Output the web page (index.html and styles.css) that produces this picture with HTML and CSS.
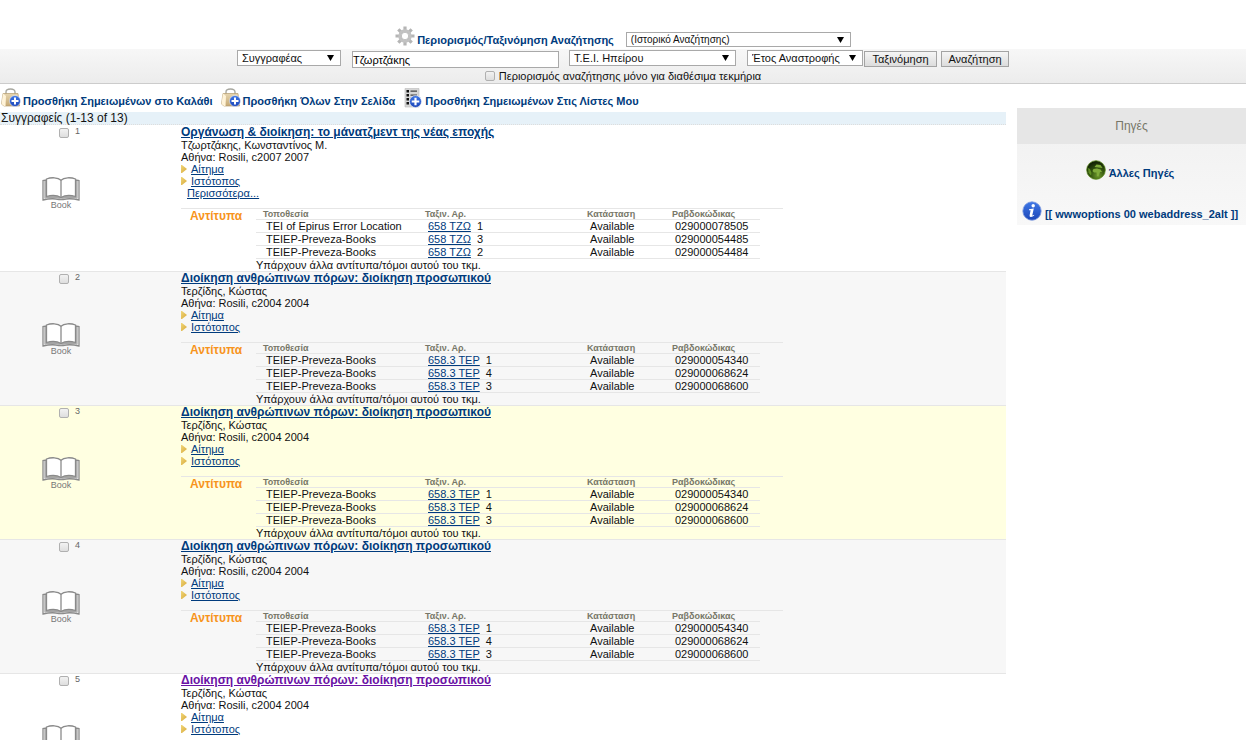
FILE: index.html
```html
<!DOCTYPE html>
<html lang="el">
<head>
<meta charset="utf-8">
<title>Αναζήτηση καταλόγου</title>
<link rel="stylesheet" href="styles.css">
</head>
<body>
<svg class="defs" aria-hidden="true">
  <defs>
    <linearGradient id="gold" x1="0" y1="0" x2="1" y2="1"><stop offset="0" stop-color="#f0d678"/><stop offset="1" stop-color="#d8a93a"/></linearGradient>
    <linearGradient id="tan" x1="0" y1="0" x2="0" y2="1"><stop offset="0" stop-color="#e6d5b0"/><stop offset="1" stop-color="#c5a873"/></linearGradient>
    <linearGradient id="blue" x1="0" y1="0" x2="0" y2="1"><stop offset="0" stop-color="#3f78e6"/><stop offset="1" stop-color="#1c46b8"/></linearGradient>
    <radialGradient id="green" cx=".6" cy=".8" r=".8"><stop offset="0" stop-color="#6f9a2c"/><stop offset=".5" stop-color="#31520f"/><stop offset="1" stop-color="#0d1a04"/></radialGradient>
    <symbol id="book" viewBox="0 0 38 24">
      <g fill="none" stroke="#8a8a8a" stroke-width="1.300">
        <path fill="#fff" d="M1 3.500V23C7 21.500 13 21.500 17 22.500H21C25 21.500 31 21.500 37 23V3.500L34 3V20H4V3Z"/>
        <path fill="#fff" d="M4.500 2C9 .2 16 .2 19 3.200C22 .2 29 .2 33.500 2V19.500C29 18 23 18 19 20.500C15 18 9 18 4.500 19.500Z"/>
        <path d="M19 3.200V20.500"/>
        <path stroke-width=".9" stroke="#a5a5a5" d="M2.800 4V21.300C8 19.500 14 20 18 21.800H20C24 20 30 19.500 35.200 21.300V4"/>
      </g>
    </symbol>
    <symbol id="plus" viewBox="0 0 12 12">
      <circle cx="6" cy="6" r="5.500" fill="url(#blue)" stroke="#fff" stroke-width=".5"/>
      <path d="M6 2.500V9.500M2.500 6H9.500" stroke="#fff" stroke-width="2"/>
    </symbol>
    <symbol id="bag" viewBox="0 0 20 20">
      <path d="M5 8V4Q5 1 9.500 1T14 4V8" fill="none" stroke="#a8a8a0" stroke-width="1.400"/>
      <path d="M2 5.500H17L18.500 18H3L.5 16Z" fill="url(#tan)" stroke="#b59c70" stroke-width=".7"/>
      <path d="M2 5.500L5 8L4.500 18H3L.5 16Z" fill="#fff3d8"/>
      <use href="#plus" x="8" y="7" width="12" height="12"/>
    </symbol>
    <symbol id="list" viewBox="0 0 18 20">
      <path d="M1 .5H15V19H1Z" fill="#d6d6d6" stroke="#bbb" stroke-width=".6"/>
      <path d="M2.500 2H5V4.500H2.500ZM2.500 6H5V8.500H2.500ZM2.500 10H5V12.500H2.500ZM2.500 14H5V16.500H2.500Z" fill="#111"/>
      <path d="M6.500 3.200H13M6.500 7.200H13M6.500 11.200H11M6.500 15.200H11" stroke="#444" stroke-width="1.300"/>
      <use href="#plus" x="5" y="7" width="13" height="13"/>
    </symbol>
    <symbol id="arrow" viewBox="0 0 6 8"><path d="M0 0H1L6 4L1 8H0Z" fill="url(#gold)"/></symbol>
  </defs>
</svg>

<form class="search" onsubmit="return false">
  <div class="history">
    <svg class="gear" viewBox="0 0 20 20" aria-hidden="true">
      <g stroke="#b5b5b5" stroke-width="3.200"><path d="M10 .5V5M10 15V19.500M.5 10H5M15 10H19.500M3.300 3.300L6.500 6.500M13.500 13.500L16.700 16.700M16.700 3.300L13.500 6.500M6.500 13.500L3.300 16.700"/></g>
      <circle cx="10" cy="10" r="5.200" fill="#fff" stroke="#c2c2c2" stroke-width="3"/>
      <circle cx="10" cy="10" r="3.700" fill="none" stroke="#a4a4a4" stroke-width=".6"/>
    </svg>
    <a class="limit" href="#">Περιορισμός/Ταξινόμηση Αναζήτησης</a>
    <select class="select select-history" aria-label="Ιστορικό"><option>(Ιστορικό Αναζήτησης)</option></select>
  </div>
  <div class="bar">
    <div class="fields">
      <select class="select select-index" aria-label="Πεδίο"><option>Συγγραφέας</option></select>
      <input class="query" type="text" value="Τζωρτζάκης" aria-label="Όρος αναζήτησης">
      <select class="select select-scope" aria-label="Συλλογή"><option>Τ.Ε.Ι. Ηπείρου</option></select>
      <span class="actions">
        <select class="select select-sort" aria-label="Σειρά"><option>Έτος Αναστροφής</option></select>
        <button class="button button-sort" type="button">Ταξινόμηση</button>
      </span>
      <button class="button button-search" type="submit">Αναζήτηση</button>
    </div>
    <label class="only"><input class="tick" type="checkbox">Περιορισμός αναζήτησης μόνο για διαθέσιμα τεκμήρια</label>
  </div>
</form>

<div class="page">
  <main class="main">
    <nav class="tools">
      <a href="#"><svg class="tool-icon" aria-hidden="true"><use href="#bag"/></svg>Προσθήκη Σημειωμένων στο Καλάθι</a>
      <a href="#"><svg class="tool-icon" aria-hidden="true"><use href="#bag"/></svg>Προσθήκη Όλων Στην Σελίδα</a>
      <a href="#"><svg class="tool-icon" aria-hidden="true"><use href="#list"/></svg>Προσθήκη Σημειωμένων Στις Λίστες Μου</a>
    </nav>
    <h1 class="summary">Συγγραφείς (1-13 of 13)</h1>

    <article class="record first">
      <div class="mark">
        <label class="pick"><input class="tick" type="checkbox">1</label>
        <div class="media"><svg class="book" aria-hidden="true"><use href="#book"/></svg><span>Book</span></div>
      </div>
      <div class="info">
        <h2><a href="#">Οργάνωση &amp; διοίκηση: το μάνατζμεντ της νέας εποχής</a></h2>
        <p>Τζωρτζάκης, Κωνσταντίνος Μ.</p>
        <p>Αθήνα: Rosili, c2007 2007</p>
        <p class="link"><svg class="arrow" aria-hidden="true"><use href="#arrow"/></svg><a href="#">Αίτημα</a></p>
        <p class="link"><svg class="arrow" aria-hidden="true"><use href="#arrow"/></svg><a href="#">Ιστότοπος</a></p>
        <p class="more"><a href="#">Περισσότερα...</a></p>
        <section class="copies">
          <h3>Αντίτυπα</h3>
          <div>
            <table>
              <thead><tr><th>Τοποθεσία</th><th>Ταξιν. Αρ.</th><th class="state">Κατάσταση</th><th class="code">Ραβδοκώδικας</th></tr></thead>
              <tbody>
                <tr><td>TEI of Epirus Error Location</td><td><a href="#">658 ΤΖΩ</a><span class="copy">1</span></td><td>Available</td><td>029000078505</td></tr>
                <tr><td>TEIEP-Preveza-Books</td><td><a href="#">658 ΤΖΩ</a><span class="copy">3</span></td><td>Available</td><td>029000054485</td></tr>
                <tr><td>TEIEP-Preveza-Books</td><td><a href="#">658 ΤΖΩ</a><span class="copy">2</span></td><td>Available</td><td>029000054484</td></tr>
              </tbody>
            </table>
            <p>Υπάρχουν άλλα αντίτυπα/τόμοι αυτού του τκμ.</p>
          </div>
        </section>
      </div>
    </article>

    <article class="record shaded">
      <div class="mark">
        <label class="pick"><input class="tick" type="checkbox">2</label>
        <div class="media"><svg class="book" aria-hidden="true"><use href="#book"/></svg><span>Book</span></div>
      </div>
      <div class="info">
        <h2><a href="#">Διοίκηση ανθρώπινων πόρων: διοίκηση προσωπικού</a></h2>
        <p>Τερζίδης, Κώστας</p>
        <p>Αθήνα: Rosili, c2004 2004</p>
        <p class="link"><svg class="arrow" aria-hidden="true"><use href="#arrow"/></svg><a href="#">Αίτημα</a></p>
        <p class="link"><svg class="arrow" aria-hidden="true"><use href="#arrow"/></svg><a href="#">Ιστότοπος</a></p>
        <section class="copies">
          <h3>Αντίτυπα</h3>
          <div>
            <table>
              <thead><tr><th>Τοποθεσία</th><th>Ταξιν. Αρ.</th><th class="state">Κατάσταση</th><th class="code">Ραβδοκώδικας</th></tr></thead>
              <tbody>
                <tr><td>TEIEP-Preveza-Books</td><td><a href="#">658.3 ΤΕΡ</a><span class="copy">1</span></td><td>Available</td><td>029000054340</td></tr>
                <tr><td>TEIEP-Preveza-Books</td><td><a href="#">658.3 ΤΕΡ</a><span class="copy">4</span></td><td>Available</td><td>029000068624</td></tr>
                <tr><td>TEIEP-Preveza-Books</td><td><a href="#">658.3 ΤΕΡ</a><span class="copy">3</span></td><td>Available</td><td>029000068600</td></tr>
              </tbody>
            </table>
            <p>Υπάρχουν άλλα αντίτυπα/τόμοι αυτού του τκμ.</p>
          </div>
        </section>
      </div>
    </article>

    <article class="record active">
      <div class="mark">
        <label class="pick"><input class="tick" type="checkbox">3</label>
        <div class="media"><svg class="book" aria-hidden="true"><use href="#book"/></svg><span>Book</span></div>
      </div>
      <div class="info">
        <h2><a href="#">Διοίκηση ανθρώπινων πόρων: διοίκηση προσωπικού</a></h2>
        <p>Τερζίδης, Κώστας</p>
        <p>Αθήνα: Rosili, c2004 2004</p>
        <p class="link"><svg class="arrow" aria-hidden="true"><use href="#arrow"/></svg><a href="#">Αίτημα</a></p>
        <p class="link"><svg class="arrow" aria-hidden="true"><use href="#arrow"/></svg><a href="#">Ιστότοπος</a></p>
        <section class="copies">
          <h3>Αντίτυπα</h3>
          <div>
            <table>
              <thead><tr><th>Τοποθεσία</th><th>Ταξιν. Αρ.</th><th class="state">Κατάσταση</th><th class="code">Ραβδοκώδικας</th></tr></thead>
              <tbody>
                <tr><td>TEIEP-Preveza-Books</td><td><a href="#">658.3 ΤΕΡ</a><span class="copy">1</span></td><td>Available</td><td>029000054340</td></tr>
                <tr><td>TEIEP-Preveza-Books</td><td><a href="#">658.3 ΤΕΡ</a><span class="copy">4</span></td><td>Available</td><td>029000068624</td></tr>
                <tr><td>TEIEP-Preveza-Books</td><td><a href="#">658.3 ΤΕΡ</a><span class="copy">3</span></td><td>Available</td><td>029000068600</td></tr>
              </tbody>
            </table>
            <p>Υπάρχουν άλλα αντίτυπα/τόμοι αυτού του τκμ.</p>
          </div>
        </section>
      </div>
    </article>

    <article class="record shaded">
      <div class="mark">
        <label class="pick"><input class="tick" type="checkbox">4</label>
        <div class="media"><svg class="book" aria-hidden="true"><use href="#book"/></svg><span>Book</span></div>
      </div>
      <div class="info">
        <h2><a href="#">Διοίκηση ανθρώπινων πόρων: διοίκηση προσωπικού</a></h2>
        <p>Τερζίδης, Κώστας</p>
        <p>Αθήνα: Rosili, c2004 2004</p>
        <p class="link"><svg class="arrow" aria-hidden="true"><use href="#arrow"/></svg><a href="#">Αίτημα</a></p>
        <p class="link"><svg class="arrow" aria-hidden="true"><use href="#arrow"/></svg><a href="#">Ιστότοπος</a></p>
        <section class="copies">
          <h3>Αντίτυπα</h3>
          <div>
            <table>
              <thead><tr><th>Τοποθεσία</th><th>Ταξιν. Αρ.</th><th class="state">Κατάσταση</th><th class="code">Ραβδοκώδικας</th></tr></thead>
              <tbody>
                <tr><td>TEIEP-Preveza-Books</td><td><a href="#">658.3 ΤΕΡ</a><span class="copy">1</span></td><td>Available</td><td>029000054340</td></tr>
                <tr><td>TEIEP-Preveza-Books</td><td><a href="#">658.3 ΤΕΡ</a><span class="copy">4</span></td><td>Available</td><td>029000068624</td></tr>
                <tr><td>TEIEP-Preveza-Books</td><td><a href="#">658.3 ΤΕΡ</a><span class="copy">3</span></td><td>Available</td><td>029000068600</td></tr>
              </tbody>
            </table>
            <p>Υπάρχουν άλλα αντίτυπα/τόμοι αυτού του τκμ.</p>
          </div>
        </section>
      </div>
    </article>

    <article class="record visited">
      <div class="mark">
        <label class="pick"><input class="tick" type="checkbox">5</label>
        <div class="media"><svg class="book" aria-hidden="true"><use href="#book"/></svg></div>
      </div>
      <div class="info">
        <h2><a href="#">Διοίκηση ανθρώπινων πόρων: διοίκηση προσωπικού</a></h2>
        <p>Τερζίδης, Κώστας</p>
        <p>Αθήνα: Rosili, c2004 2004</p>
        <p class="link"><svg class="arrow" aria-hidden="true"><use href="#arrow"/></svg><a href="#">Αίτημα</a></p>
        <p class="link"><svg class="arrow" aria-hidden="true"><use href="#arrow"/></svg><a href="#">Ιστότοπος</a></p>
      </div>
    </article>
  </main>

  <aside class="sources">
    <h2>Πηγές</h2>
    <div class="source-links">
      <a href="#">
        <svg class="source-icon" viewBox="0 0 20 20" aria-hidden="true">
          <circle cx="10" cy="10" r="9.300" fill="url(#green)" stroke="#5b8a1c" stroke-width=".8"/>
          <path d="M7.500 9L11 8.500L14.500 9.500L16 12H14L12.500 16.500L11 16L10.500 12.500H8L6.500 11ZM8.500 7L10.500 4.500L14.500 5L16.500 8L12.500 7.500Z" fill="#7fab3a"/>
          <path d="M2 8L4 9L5.500 13L5 15.500L2.500 13Z" fill="#5f8f22"/>
        </svg>
        Άλλες Πηγές</a>
      <a href="#">
        <svg class="source-icon" viewBox="0 0 20 20" aria-hidden="true">
          <circle cx="10" cy="10" r="9.200" fill="url(#blue)" stroke="#7d9be0" stroke-width=".8"/>
          <circle cx="11.200" cy="4.800" r="1.700" fill="#fff"/>
          <path d="M7 8.300L11.800 7.600L10.300 14.200Q10.200 15 12.300 13.800L12 14.800Q7 17.500 7.600 14.200L8.600 9.300L7 9.200Z" fill="#fff"/>
        </svg>
        [[ wwwoptions 00 webaddress_2alt ]]</a>
    </div>
  </aside>
</div>
</body>
</html>
```
FILE: styles.css
```css
* { box-sizing: border-box; }
body {
  margin: 0;
  height: 100vh;
  overflow: hidden;
  background: #fff;
  color: #111;
  font: 11px/12px "Liberation Sans", Arial, sans-serif;
}
h1, h2, h3, p { margin: 0; font-size: inherit; }
a { color: #003b7d; }
.defs { position: absolute; width: 0; height: 0; }

.search { padding-top: 26px; }
.history { display: flex; justify-content: center; height: 23px; }
.gear { width: 20px; height: 20px; margin-right: 2px; }
.limit { margin: 8px 12px 0 0; font-weight: bold; text-decoration: none; }
.select {
  appearance: none;
  height: 16px;
  padding: 0 20px 0 4px;
  border: 1px solid #a9a9a9;
  border-radius: 0;
  background: #fff url("data:image/svg+xml,%3Csvg xmlns='http://www.w3.org/2000/svg' width='7' height='6'%3E%3Cpath d='M0 0H7L3.500 6Z'/%3E%3C/svg%3E") no-repeat right 6px center;
  color: #111;
  font: 11px/14px "Liberation Sans", Arial, sans-serif;
}
.select-history { width: 225px; height: 15px; margin-top: 6px; font-size: 10px; line-height: 13px; }
.bar {
  height: 35px;
  padding-top: 1px;
  border-bottom: 1px solid #ccc;
  background: linear-gradient(#f7f7f7, #ececec);
}
.fields { display: flex; justify-content: center; align-items: flex-start; }
.select-index { width: 104px; }
.select-scope { width: 167px; margin-right: 11px; }
.select-sort { width: 116px; padding-right: 14px; }
.query {
  width: 207px;
  height: 17px;
  margin: 1px 10px 0 11px;
  padding: 0;
  border: 1px solid #a9a9a9;
  font: inherit;
}
.actions { display: flex; gap: 1px; margin-right: 4px; }
.button {
  height: 16px;
  margin-top: 1px;
  padding: 0;
  border: 1px solid #a3a3a3;
  background: linear-gradient(#f5f5f5, #dcdcdc);
  color: #111;
  font: inherit;
}
.button-sort { width: 73px; }
.button-search { width: 68px; }
.only { display: flex; justify-content: center; align-items: center; gap: 4px; margin-top: 2px; line-height: 12px; }
.tick {
  appearance: none;
  width: 10px;
  height: 10px;
  margin: 0;
  border: 1px solid #b0b0b0;
  border-radius: 2px;
  background: linear-gradient(#f2f2f2, #dedede);
}

.page { display: grid; grid-template-columns: minmax(0, 1fr) 229px; column-gap: 11px; align-items: start; }
.tools { display: flex; gap: 8px; height: 28px; padding: 4px 0 0 1px; }
.tools a { display: flex; gap: 2px; font-weight: bold; text-decoration: none; line-height: 26px; }
.tool-icon { width: 20px; height: 20px; }
.summary {
  height: 13px;
  padding-left: 1px;
  border-bottom: 1px dotted #ddd;
  background: #e6f1f8;
  font-size: 12px;
  font-weight: normal;
}
.record { display: grid; grid-template-columns: 181px minmax(0, 1fr); border-top: 1px solid #e6e6e6; }
.first { border-top-color: transparent; }
.shaded { background: #f7f7f7; }
.active { background: #ffffe1; }
.visited h2 a { color: #6a12a5; }
.mark { padding-left: 59px; }
.pick { display: flex; gap: 6px; padding-top: 2px; color: #666; font-size: 9px; line-height: 6px; }
.media {
  width: 38px;
  margin: 39px 0 0 -17px;
  color: #777;
  font-size: 9px;
  line-height: 8px;
  text-align: center;
}
.book { display: block; width: 38px; height: 24px; }
.info h2 { font-size: 12px; line-height: 13px; }
.link { display: flex; align-items: center; gap: 4px; }
.arrow { width: 6px; height: 8px; }
.more { padding-left: 6px; }
.copies { display: grid; grid-template-columns: 75px 504px; width: 602px; margin-top: 9px; border-top: 1px solid #e6e6e6; }
.copies h3 { padding-left: 9px; color: #f7941d; font-size: 12px; line-height: 14px; }
table { width: 504px; table-layout: fixed; border-collapse: separate; border-spacing: 0; }
th, td { border-bottom: 1px solid #e6e6e6; text-align: left; white-space: nowrap; }
th { padding: 0 0 0 7px; color: #777768; font-size: 9px; line-height: 10px; }
td { padding: 0 0 0 10px; line-height: 12px; }
.state { width: 85px; }
.code { width: 95px; }
.copy { margin-left: 6px; }

.sources { margin-top: 24px; background: linear-gradient(#f0f0f0, #f8f8f8); text-align: center; }
.sources h2 { background: #e6e6e6; color: #777768; font-size: 12px; font-weight: normal; line-height: 36px; }
.source-links { display: grid; gap: 21px; padding: 16px 3px 4px 0; }
.source-links a { display: flex; justify-content: center; gap: 3px; font-weight: bold; line-height: 26px; height: 20px; text-decoration: none; }
.source-icon { width: 20px; height: 20px; }
```
